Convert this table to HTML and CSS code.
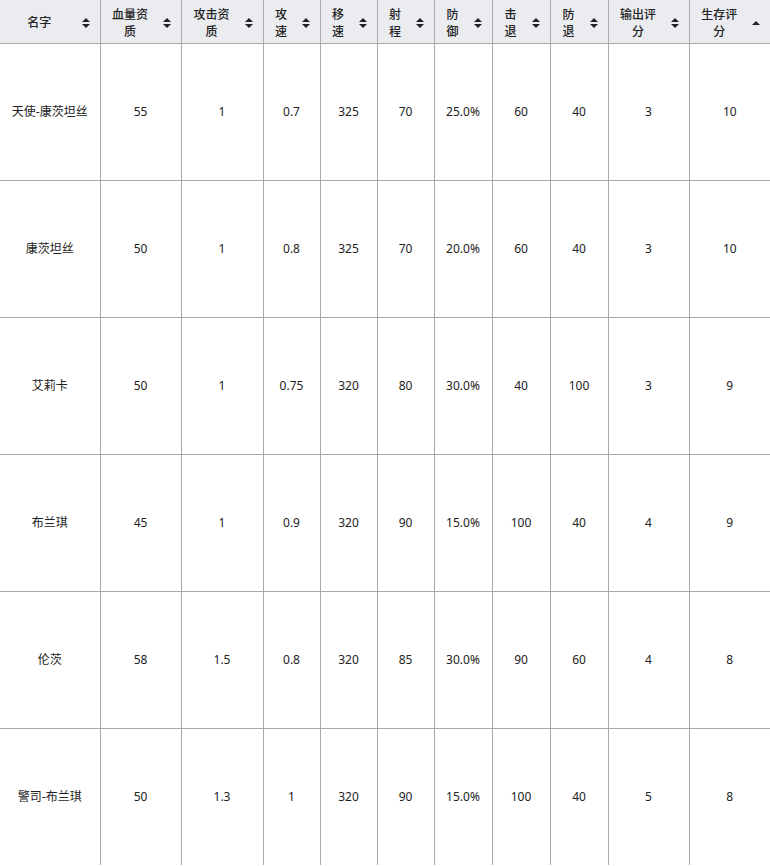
FILE: index.html
```html
<!DOCTYPE html>
<html lang="zh">
<head>
<meta charset="utf-8">
<title>角色数据</title>
<link rel="stylesheet" href="styles.css">
</head>
<body>
<table class="wikitable">
  <colgroup>
    <col class="c-name"><col class="c-w81"><col class="c-w82"><col class="c-w57"><col class="c-w57"><col class="c-w57"><col class="c-w58"><col class="c-w58"><col class="c-w58"><col class="c-w81"><col class="c-w81">
  </colgroup>
  <thead>
    <tr>
      <th><div class="th-in"><span class="th-text">名字</span><svg class="sort" viewBox="0 0 8 10"><path d="M0 4 L4 0 L8 4 Z M0 6 L8 6 L4 10 Z"/></svg></div></th>
      <th><div class="th-in"><span class="th-text">血量资质</span><svg class="sort" viewBox="0 0 8 10"><path d="M0 4 L4 0 L8 4 Z M0 6 L8 6 L4 10 Z"/></svg></div></th>
      <th><div class="th-in"><span class="th-text">攻击资质</span><svg class="sort" viewBox="0 0 8 10"><path d="M0 4 L4 0 L8 4 Z M0 6 L8 6 L4 10 Z"/></svg></div></th>
      <th><div class="th-in"><span class="th-text">攻速</span><svg class="sort" viewBox="0 0 8 10"><path d="M0 4 L4 0 L8 4 Z M0 6 L8 6 L4 10 Z"/></svg></div></th>
      <th><div class="th-in"><span class="th-text">移速</span><svg class="sort" viewBox="0 0 8 10"><path d="M0 4 L4 0 L8 4 Z M0 6 L8 6 L4 10 Z"/></svg></div></th>
      <th><div class="th-in"><span class="th-text">射程</span><svg class="sort" viewBox="0 0 8 10"><path d="M0 4 L4 0 L8 4 Z M0 6 L8 6 L4 10 Z"/></svg></div></th>
      <th><div class="th-in"><span class="th-text">防御</span><svg class="sort" viewBox="0 0 8 10"><path d="M0 4 L4 0 L8 4 Z M0 6 L8 6 L4 10 Z"/></svg></div></th>
      <th><div class="th-in"><span class="th-text">击退</span><svg class="sort" viewBox="0 0 8 10"><path d="M0 4 L4 0 L8 4 Z M0 6 L8 6 L4 10 Z"/></svg></div></th>
      <th><div class="th-in"><span class="th-text">防退</span><svg class="sort" viewBox="0 0 8 10"><path d="M0 4 L4 0 L8 4 Z M0 6 L8 6 L4 10 Z"/></svg></div></th>
      <th><div class="th-in"><span class="th-text">输出评分</span><svg class="sort" viewBox="0 0 8 10"><path d="M0 4 L4 0 L8 4 Z M0 6 L8 6 L4 10 Z"/></svg></div></th>
      <th><div class="th-in"><span class="th-text">生存评分</span><svg class="sort" viewBox="0 0 8 10"><path d="M0 7 L4 3 L8 7 Z"/></svg></div></th>
    </tr>
  </thead>
  <tbody>
    <tr><td>天使-康茨坦丝</td><td>55</td><td>1</td><td>0.7</td><td>325</td><td>70</td><td>25.0%</td><td>60</td><td>40</td><td>3</td><td>10</td></tr>
    <tr><td>康茨坦丝</td><td>50</td><td>1</td><td>0.8</td><td>325</td><td>70</td><td>20.0%</td><td>60</td><td>40</td><td>3</td><td>10</td></tr>
    <tr><td>艾莉卡</td><td>50</td><td>1</td><td>0.75</td><td>320</td><td>80</td><td>30.0%</td><td>40</td><td>100</td><td>3</td><td>9</td></tr>
    <tr><td>布兰琪</td><td>45</td><td>1</td><td>0.9</td><td>320</td><td>90</td><td>15.0%</td><td>100</td><td>40</td><td>4</td><td>9</td></tr>
    <tr><td>伦茨</td><td>58</td><td>1.5</td><td>0.8</td><td>320</td><td>85</td><td>30.0%</td><td>90</td><td>60</td><td>4</td><td>8</td></tr>
    <tr><td>警司-布兰琪</td><td>50</td><td>1.3</td><td>1</td><td>320</td><td>90</td><td>15.0%</td><td>100</td><td>40</td><td>5</td><td>8</td></tr>
  </tbody>
</table>
</body>
</html>
```
FILE: styles.css
```css
html, body {
  margin: 0;
  padding: 0;
  background: #ffffff;
}
body {
  width: 770px;
  height: 866px;
  overflow: hidden;
  font-family: "Noto Sans", "Noto Sans CJK SC", sans-serif;
  font-size: 12px;
  color: #222222;
}
.wikitable {
  width: 770px;
  table-layout: fixed;
  border-collapse: collapse;
  border-style: hidden;
}
.c-name { width: 100px; }
.c-w81 { width: 81px; }
.c-w82 { width: 82px; }
.c-w57 { width: 57px; }
.c-w58 { width: 58px; }

.wikitable th,
.wikitable td {
  border: 1px solid #a7a9ab;
  padding: 0;
}
.wikitable th {
  height: 43px;
  background: #eaecf0;
  font-weight: 500;
  padding: 3px 10px 0 7px;
  box-sizing: border-box;
  vertical-align: middle;
}
.th-in {
  display: flex;
  align-items: center;
}
.th-text {
  flex: 1;
  min-width: 0;
  text-align: center;
  line-height: 17px;
}
.sort {
  width: 8px;
  height: 10px;
  margin-left: 10px;
  flex: none;
  fill: #202122;
}
.wikitable td {
  height: 136px;
  text-align: center;
  vertical-align: middle;
  line-height: 17px;
}
```
